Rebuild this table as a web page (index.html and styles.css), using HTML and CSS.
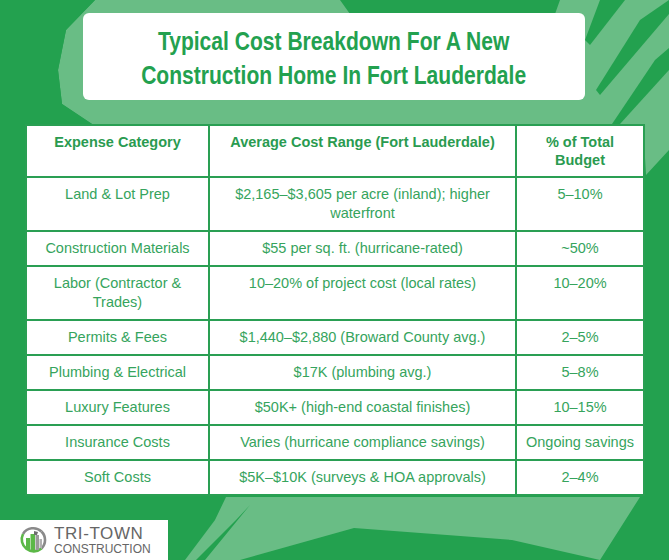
FILE: index.html
```html
<!DOCTYPE html>
<html>
<head>
<meta charset="utf-8">
<link rel="stylesheet" href="styles.css">
</head>
<body>
<div class="canvas">
  <svg class="brush" width="669" height="560" viewBox="0 0 669 560" aria-hidden="true">
    <polygon fill="#69bd85" points="95,0 340,0 350,14 555,14 560,0 669,0 669,150 646,175 643,124 92,124 62,104 58,70 66,30"/>
    <polygon fill="#23a14f" points="600,0 625,0 590,45 585,40"/>
    <polygon fill="#23a14f" points="640,20 669,0 669,14 600,95 596,90"/>
    <polygon fill="#23a14f" points="655,60 669,48 669,70 620,124 612,124"/>
    <polygon fill="#23a14f" points="0,0 95,0 66,30 58,70 62,104 92,124 0,124"/>
    <polygon fill="#69bd85" points="226,497 640,497 600,560 512,540 354,528 240,560 185,560 215,520"/>
    <polygon fill="#23a14f" points="236,520 250,505 205,560 196,560"/>
  </svg>
  <div class="content">
    <header class="title-box">
      <h1 class="title">Typical Cost Breakdown For A New<br>Construction Home In Fort Lauderdale</h1>
    </header>
    <table class="costs">
      <colgroup>
        <col class="c1"><col class="c2"><col class="c3">
      </colgroup>
      <thead>
        <tr><th>Expense Category</th><th>Average Cost Range (Fort Lauderdale)</th><th>% of Total<br>Budget</th></tr>
      </thead>
      <tbody>
        <tr><td>Land &amp; Lot Prep</td><td>$2,165–$3,605 per acre (inland); higher<br>waterfront</td><td>5–10%</td></tr>
        <tr><td>Construction Materials</td><td>$55 per sq. ft. (hurricane-rated)</td><td>~50%</td></tr>
        <tr><td>Labor (Contractor &amp;<br>Trades)</td><td>10–20% of project cost (local rates)</td><td>10–20%</td></tr>
        <tr><td>Permits &amp; Fees</td><td>$1,440–$2,880 (Broward County avg.)</td><td>2–5%</td></tr>
        <tr><td>Plumbing &amp; Electrical</td><td>$17K (plumbing avg.)</td><td>5–8%</td></tr>
        <tr><td>Luxury Features</td><td>$50K+ (high-end coastal finishes)</td><td>10–15%</td></tr>
        <tr><td>Insurance Costs</td><td>Varies (hurricane compliance savings)</td><td>Ongoing savings</td></tr>
        <tr><td>Soft Costs</td><td>$5K–$10K (surveys &amp; HOA approvals)</td><td>2–4%</td></tr>
      </tbody>
    </table>
    <div class="logo">
      <svg class="logo-mark" width="28" height="28" viewBox="0 0 28 28" aria-hidden="true">
        <path d="M22.5 5.5 A12 12 0 0 0 4 8" fill="none" stroke="#8a8a8a" stroke-width="2.6"/>
        <path d="M4 8 A12 12 0 0 0 22.5 22.5" fill="none" stroke="#5cb848" stroke-width="2.6"/>
        <path d="M22.5 22.5 A12 12 0 0 0 22.5 5.5" fill="none" stroke="#8a8a8a" stroke-width="2.6"/>
        <rect x="7" y="12" width="4" height="12" fill="#5cb848"/>
        <rect x="11.5" y="8" width="4.5" height="17" fill="#5cb848"/>
        <rect x="16.5" y="9" width="3.5" height="15" fill="#9a9a9a"/>
        <rect x="20.5" y="13" width="2.5" height="9" fill="#b0b0b0"/>
        <path d="M15 5 L19 6 L18 9 L15 9 Z" fill="#6e6e6e"/>
      </svg>
      <div class="logo-text">
        <span class="logo-name">TRI-TOWN</span>
        <span class="logo-sub">CONSTRUCTION</span>
      </div>
    </div>
  </div>
</div>
</body>
</html>
```
FILE: styles.css
```css
html, body {
  margin: 0;
  padding: 0;
}
body {
  width: 669px;
  height: 560px;
  overflow: hidden;
  background: #23a14f;
  font-family: "Liberation Sans", Arial, sans-serif;
}
.canvas {
  position: relative;
  width: 669px;
  height: 560px;
}
.brush {
  position: absolute;
  left: 0;
  top: 0;
}
.content {
  position: relative;
  display: flex;
  flex-direction: column;
  align-items: flex-start;
  height: 560px;
}
.title-box {
  margin: 13px 0 0 83px;
  width: 502px;
  height: 87px;
  box-sizing: border-box;
  padding-top: 3px;
  background: #fff;
  border-radius: 6px;
  display: flex;
  align-items: center;
  justify-content: center;
}
.title {
  margin: 0;
  font-family: "Liberation Sans", Arial, sans-serif;
  font-weight: 700;
  font-size: 26px;
  line-height: 34px;
  color: #23a14f;
  text-align: center;
  white-space: nowrap;
  transform: scaleX(0.81);
}
.costs {
  margin: 24px 0 0 25px;
  width: 618px;
  border-collapse: collapse;
  table-layout: fixed;
  background: #fff;
  color: #36a45d;
  font-size: 14.5px;
}
.c1 { width: 183px; }
.c2 { width: 307px; }
.c3 { width: 128px; }
.costs th,
.costs td {
  border: 2px solid #2a9f53;
  padding: 7px 4px;
  text-align: center;
  vertical-align: top;
  line-height: 19px;
}
.costs th {
  font-size: 14.5px;
  font-weight: 700;
  color: #2a9b50;
  line-height: 18px;
}
.logo {
  margin-top: auto;
  width: 168px;
  height: 40px;
  background: #fff;
  display: flex;
  align-items: center;
  padding-left: 19px;
  box-sizing: border-box;
  gap: 7px;
}
.logo-text {
  display: flex;
  flex-direction: column;
  color: #666;
  line-height: 1;
}
.logo-name {
  font-size: 17px;
  letter-spacing: 0.6px;
}
.logo-sub {
  font-size: 12px;
  margin-top: 1px;
}
```
